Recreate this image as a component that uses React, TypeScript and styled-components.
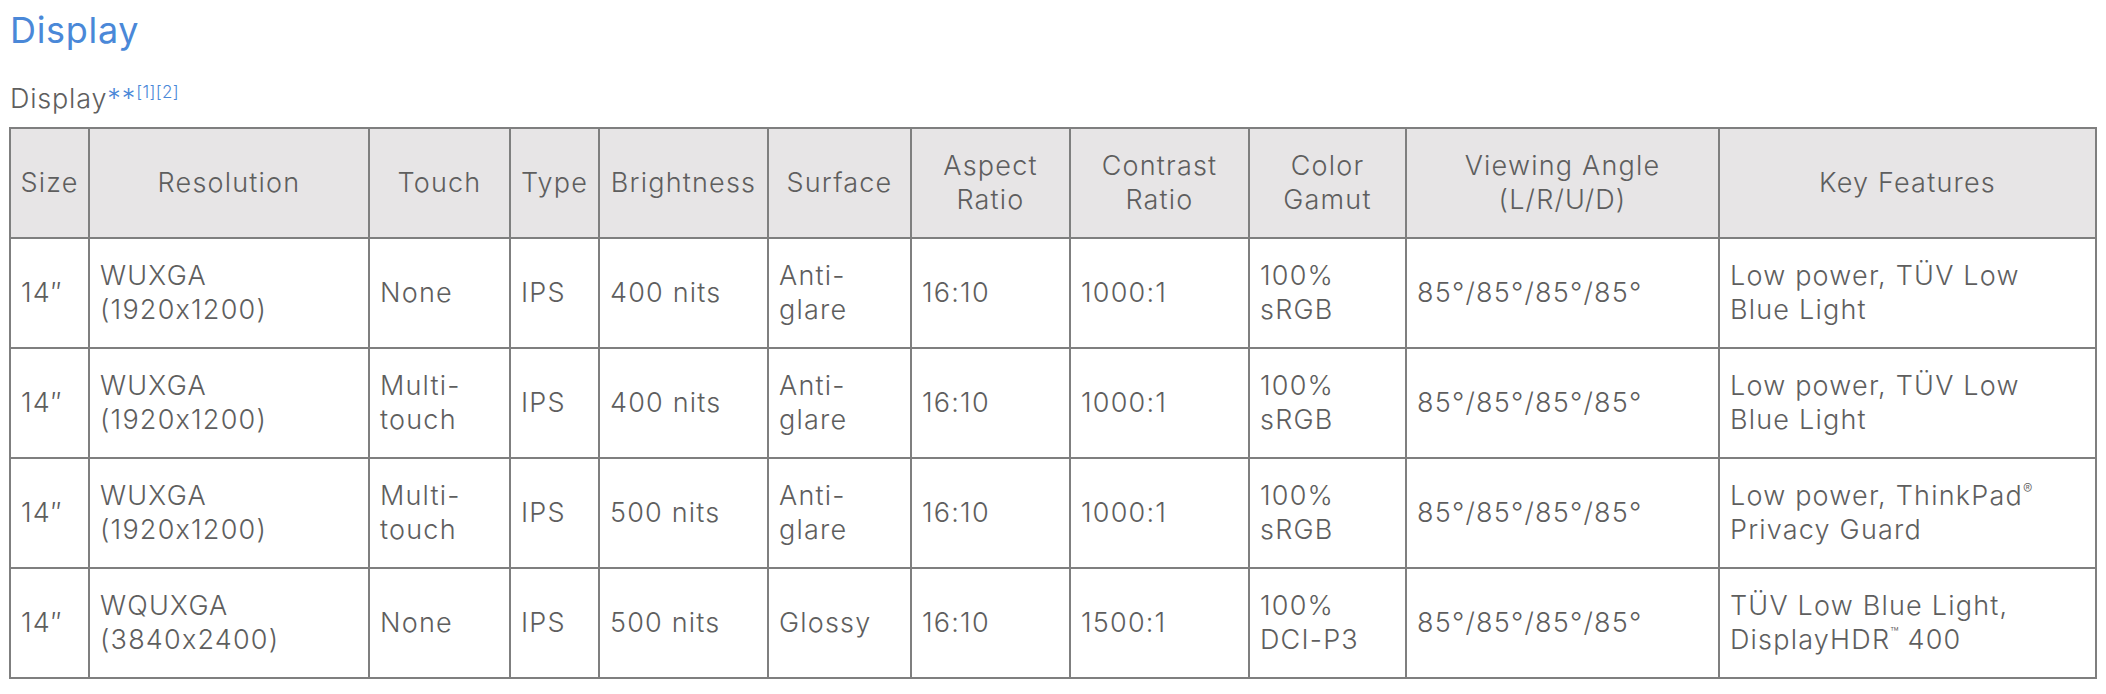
import React from "react";
import styled, { createGlobalStyle } from "styled-components";

const GlobalStyle = createGlobalStyle`
  body {
    margin: 0;
    background: #ffffff;
    font-family: Inter, "Noto Sans", "Liberation Sans", sans-serif;
    font-feature-settings: "calt" 0;
    color: #5e5e5e;
  }
`;

const Page = styled.div`
  padding: 0 12px 0 9px;
`;

const Title = styled.h2`
  margin: 12px 0 0 1px;
  font-size: 36px;
  line-height: 36px;
  font-weight: 400;
  letter-spacing: 0.7px;
  color: #4a88d8;
`;

const Subtitle = styled.div`
  margin: 37px 0 0 1px;
  font-size: 27px;
  line-height: 27px;
  font-weight: 300;
  letter-spacing: 0.8px;
  color: #5e5e5e;
`;

const Stars = styled.span`
  color: #4a88d8;
  letter-spacing: 1px;
`;

const Refs = styled.sup`
  color: #4a88d8;
  font-size: 17px;
  letter-spacing: 0.3px;
  vertical-align: 10px;
  line-height: 0;
`;

const Table = styled.table`
  margin-top: 15px;
  width: 2086px;
  border-collapse: collapse;
  table-layout: fixed;
  font-size: 27px;
  line-height: 34px;
  font-weight: 300;
  letter-spacing: 1.2px;
`;

const HeadCell = styled.th`
  height: 108px;
  padding: 0 6px;
  border: 2px solid #7f7f7f;
  background: #e7e5e6;
  font-weight: 300;
  text-align: center;
  vertical-align: middle;
`;

const Cell = styled.td`
  height: 108px;
  padding: 0 8px 0 10px;
  border: 2px solid #7f7f7f;
  text-align: left;
  vertical-align: middle;
`;

const Mark = styled.sup`
  font-size: 14px;
  line-height: 0;
  letter-spacing: 0;
  vertical-align: 11px;
`;

const widths = [79, 280, 141, 89, 169, 143, 159, 179, 157, 313, 377];

const headers: React.ReactNode[] = [
  "Size",
  "Resolution",
  "Touch",
  "Type",
  "Brightness",
  "Surface",
  <>Aspect<br />Ratio</>,
  <>Contrast<br />Ratio</>,
  <>Color<br />Gamut</>,
  <>Viewing Angle<br />(L/R/U/D)</>,
  "Key Features",
];

const rows: React.ReactNode[][] = [
  [
    "14″",
    <>WUXGA<br />(1920x1200)</>,
    "None",
    "IPS",
    "400 nits",
    <>Anti-<br />glare</>,
    "16:10",
    "1000:1",
    <>100%<br />sRGB</>,
    "85°/85°/85°/85°",
    <>Low power, TÜV Low<br />Blue Light</>,
  ],
  [
    "14″",
    <>WUXGA<br />(1920x1200)</>,
    <>Multi-<br />touch</>,
    "IPS",
    "400 nits",
    <>Anti-<br />glare</>,
    "16:10",
    "1000:1",
    <>100%<br />sRGB</>,
    "85°/85°/85°/85°",
    <>Low power, TÜV Low<br />Blue Light</>,
  ],
  [
    "14″",
    <>WUXGA<br />(1920x1200)</>,
    <>Multi-<br />touch</>,
    "IPS",
    "500 nits",
    <>Anti-<br />glare</>,
    "16:10",
    "1000:1",
    <>100%<br />sRGB</>,
    "85°/85°/85°/85°",
    <>Low power, ThinkPad<Mark>®</Mark><br />Privacy Guard</>,
  ],
  [
    "14″",
    <>WQUXGA<br />(3840x2400)</>,
    "None",
    "IPS",
    "500 nits",
    "Glossy",
    "16:10",
    "1500:1",
    <>100%<br />DCI-P3</>,
    "85°/85°/85°/85°",
    <>TÜV Low Blue Light,<br />DisplayHDR<Mark>™</Mark> 400</>,
  ],
];

export default function App() {
  return (
    <Page>
      <GlobalStyle />
      <Title>Display</Title>
      <Subtitle>
        Display<Stars>**</Stars>
        <Refs>[1][2]</Refs>
      </Subtitle>
      <Table>
        <colgroup>
          {widths.map((w, i) => (
            <col key={i} style={{ width: w }} />
          ))}
        </colgroup>
        <thead>
          <tr>
            {headers.map((h, i) => (
              <HeadCell key={i}>{h}</HeadCell>
            ))}
          </tr>
        </thead>
        <tbody>
          {rows.map((row, r) => (
            <tr key={r}>
              {row.map((c, i) => (
                <Cell key={i}>{c}</Cell>
              ))}
            </tr>
          ))}
        </tbody>
      </Table>
    </Page>
  );
}
